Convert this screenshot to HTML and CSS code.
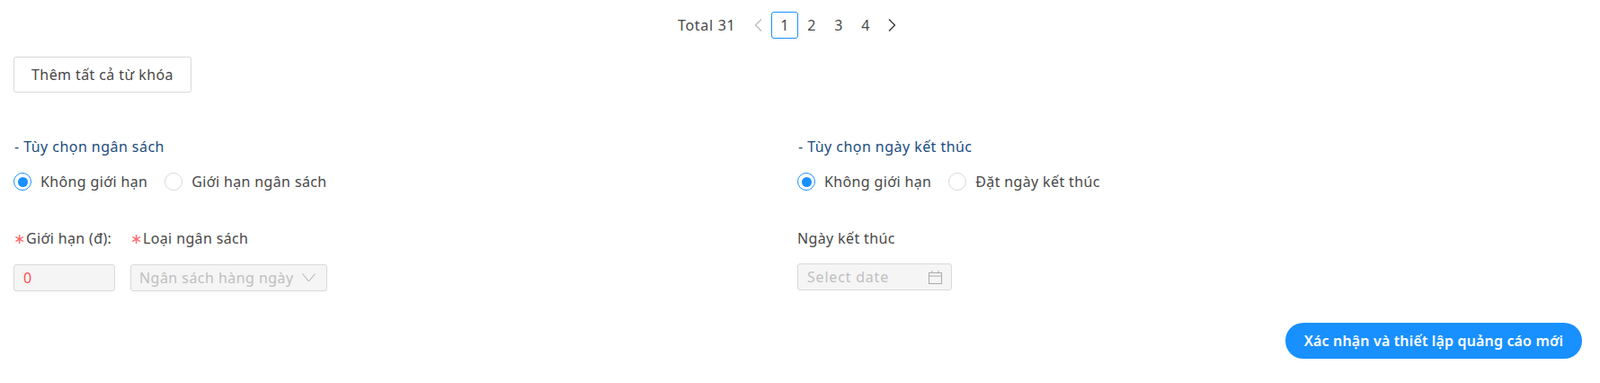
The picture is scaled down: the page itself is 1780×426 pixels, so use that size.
FILE: index.html
```html
<!DOCTYPE html>
<html lang="vi">

<head>
    <meta charset="UTF-8">
    <meta name="viewport" content="width=device-width, initial-scale=1.0">
    <title>Thiết lập quảng cáo</title>
    <link rel="stylesheet" href="styles.css">
</head>

<body>
    <ul class="pagination">
        <li class="total">Total 31</li>
        <li class="arrow disabled">
            <svg width="12" height="16" viewBox="0 0 12 16"><path d="M10 1.5 3.5 8l6.500 6.500" /></svg>
        </li>
        <li class="page active">1</li>
        <li class="page">2</li>
        <li class="page">3</li>
        <li class="page">4</li>
        <li class="arrow">
            <svg width="12" height="16" viewBox="0 0 12 16"><path d="M2 1.500 8.500 8 2 14.500" /></svg>
        </li>
    </ul>

    <button type="button" class="btnAdd">Thêm tất cả từ khóa</button>

    <div class="options">
        <div class="col">
            <h4 class="title">- Tùy chọn ngân sách</h4>
            <div class="radios">
                <label class="radio checked"><span class="dot"></span>Không giới hạn</label>
                <label class="radio"><span class="dot"></span>Giới hạn ngân sách</label>
            </div>
            <div class="fields">
                <div class="field w113">
                    <div class="label"><span class="req">∗</span>Giới hạn (đ):</div>
                    <div class="input red">0</div>
                </div>
                <div class="field w219">
                    <div class="label"><span class="req">∗</span>Loại ngân sách</div>
                    <div class="input select">
                        <span class="ph">Ngân sách hàng ngày</span>
                        <svg width="15" height="10" viewBox="0 0 15 10"><path d="M.5.5 7.500 9 14.500.5" /></svg>
                    </div>
                </div>
            </div>
        </div>
        <div class="col">
            <h4 class="title">- Tùy chọn ngày kết thúc</h4>
            <div class="radios">
                <label class="radio checked"><span class="dot"></span>Không giới hạn</label>
                <label class="radio"><span class="dot"></span>Đặt ngày kết thúc</label>
            </div>
            <div class="fields">
                <div class="field w172">
                    <div class="label">Ngày kết thúc</div>
                    <div class="input date">
                        <span class="ph">Select date</span>
                        <svg width="15" height="15" viewBox="0 0 15 15">
                            <rect x=".5" y="2.500" width="14" height="12" />
                            <path d="M.5 6h14M4 0v3M11 0v3" />
                        </svg>
                    </div>
                </div>
            </div>
        </div>
    </div>

    <div class="footer">
        <button type="button" class="btnSubmit">Xác nhận và thiết lập quảng cáo mới</button>
    </div>
</body>

</html>
```

FILE: styles.css
```css
*,
*::after,
*::before {
    box-sizing: border-box;
}

body {
    margin: 0;
    padding: 13px 15px 0;
    background-color: #fff;
    color: #484848;
    font-family: 'Noto Sans', 'Open Sans', sans-serif;
    font-size: 16px;
    letter-spacing: .36px;
}

.pagination {
    display: flex;
    align-items: center;
    list-style: none;
    margin: 0 0 20px 739px;
    padding: 0;
    height: 30px;
}

.pagination .total {
    width: 74px;
    letter-spacing: .7px;
}

.pagination .arrow {
    width: 30px;
    height: 30px;
    display: flex;
    align-items: center;
    justify-content: center;
}

.pagination svg path {
    fill: none;
    stroke: #333;
    stroke-width: 1.3;
}

.pagination .disabled svg path {
    stroke: #bbb;
}

.page {
    width: 30px;
    height: 30px;
    line-height: 28px;
    text-align: center;
    border: 1px solid transparent;
    border-radius: 3px;
}

.page.active {
    border-color: #1890ff;
}

.btnAdd {
    display: block;
    width: 198px;
    height: 40px;
    padding: 0;
    background-color: #fff;
    border: 1px solid #d9d9d9;
    border-radius: 3px;
    color: #484848;
    font-family: inherit;
    font-size: 16px;
    letter-spacing: .4px;
}

.options {
    display: grid;
    grid-template-columns: 872px 1fr;
    margin-top: 50px;
}

.title {
    margin: 0;
    height: 20px;
    line-height: 20px;
    padding-left: 1px;
    color: #1b4d80;
    font-size: 16px;
    font-weight: 400;
    letter-spacing: .45px;
}

.radios {
    display: flex;
    gap: 19px;
    margin-top: 19px;
    height: 20px;
}

.radio {
    display: flex;
    align-items: center;
    line-height: 20px;
}

.dot {
    width: 20px;
    height: 20px;
    margin-right: 10px;
    border: 1px solid #d9d9d9;
    border-radius: 50%;
    display: flex;
    align-items: center;
    justify-content: center;
}

.checked .dot {
    border-color: #1890ff;
}

.checked .dot::after {
    content: "";
    width: 11px;
    height: 11px;
    border-radius: 50%;
    background-color: #1890ff;
}

.fields {
    display: flex;
    gap: 17px;
    margin-top: 43px;
}

.label {
    height: 20px;
    line-height: 20px;
    white-space: nowrap;
}

.req {
    display: inline-block;
    width: 14px;
    color: #ff6b6d;
    font-family: 'DejaVu Sans', sans-serif;
    font-size: 16px;
    letter-spacing: 0;
}

.w113 {
    width: 113px;
}

.w219 {
    width: 219px;
}

.w172 {
    width: 172px;
}

.input {
    height: 30px;
    margin-top: 19px;
    padding: 0 10px;
    display: flex;
    align-items: center;
    justify-content: space-between;
    background-color: #f5f5f5;
    border: 1px solid #d9d9d9;
    border-radius: 3px;
}

.input.select {
    padding: 0 12px 0 9px;
    letter-spacing: .45px;
}

.input.date {
    margin-top: 18px;
    padding: 0 10px;
    letter-spacing: .8px;
}

.input.red {
    color: #ff4d4f;
}

.ph {
    color: #bfbfbf;
    white-space: nowrap;
}

.input svg path,
.input svg rect {
    fill: none;
    stroke: #aaa;
    stroke-width: 1;
}

.footer {
    display: flex;
    justify-content: flex-end;
    margin-top: 35px;
    padding-right: 5px;
}

.btnSubmit {
    width: 330px;
    height: 40px;
    padding: 0;
    background-color: #1890ff;
    border: 0;
    border-radius: 20px;
    box-shadow: 0 2px 2px rgba(0, 0, 0, .04);
    color: #fff;
    font-family: inherit;
    font-size: 16px;
    font-weight: 600;
    letter-spacing: .15px;
}
```
